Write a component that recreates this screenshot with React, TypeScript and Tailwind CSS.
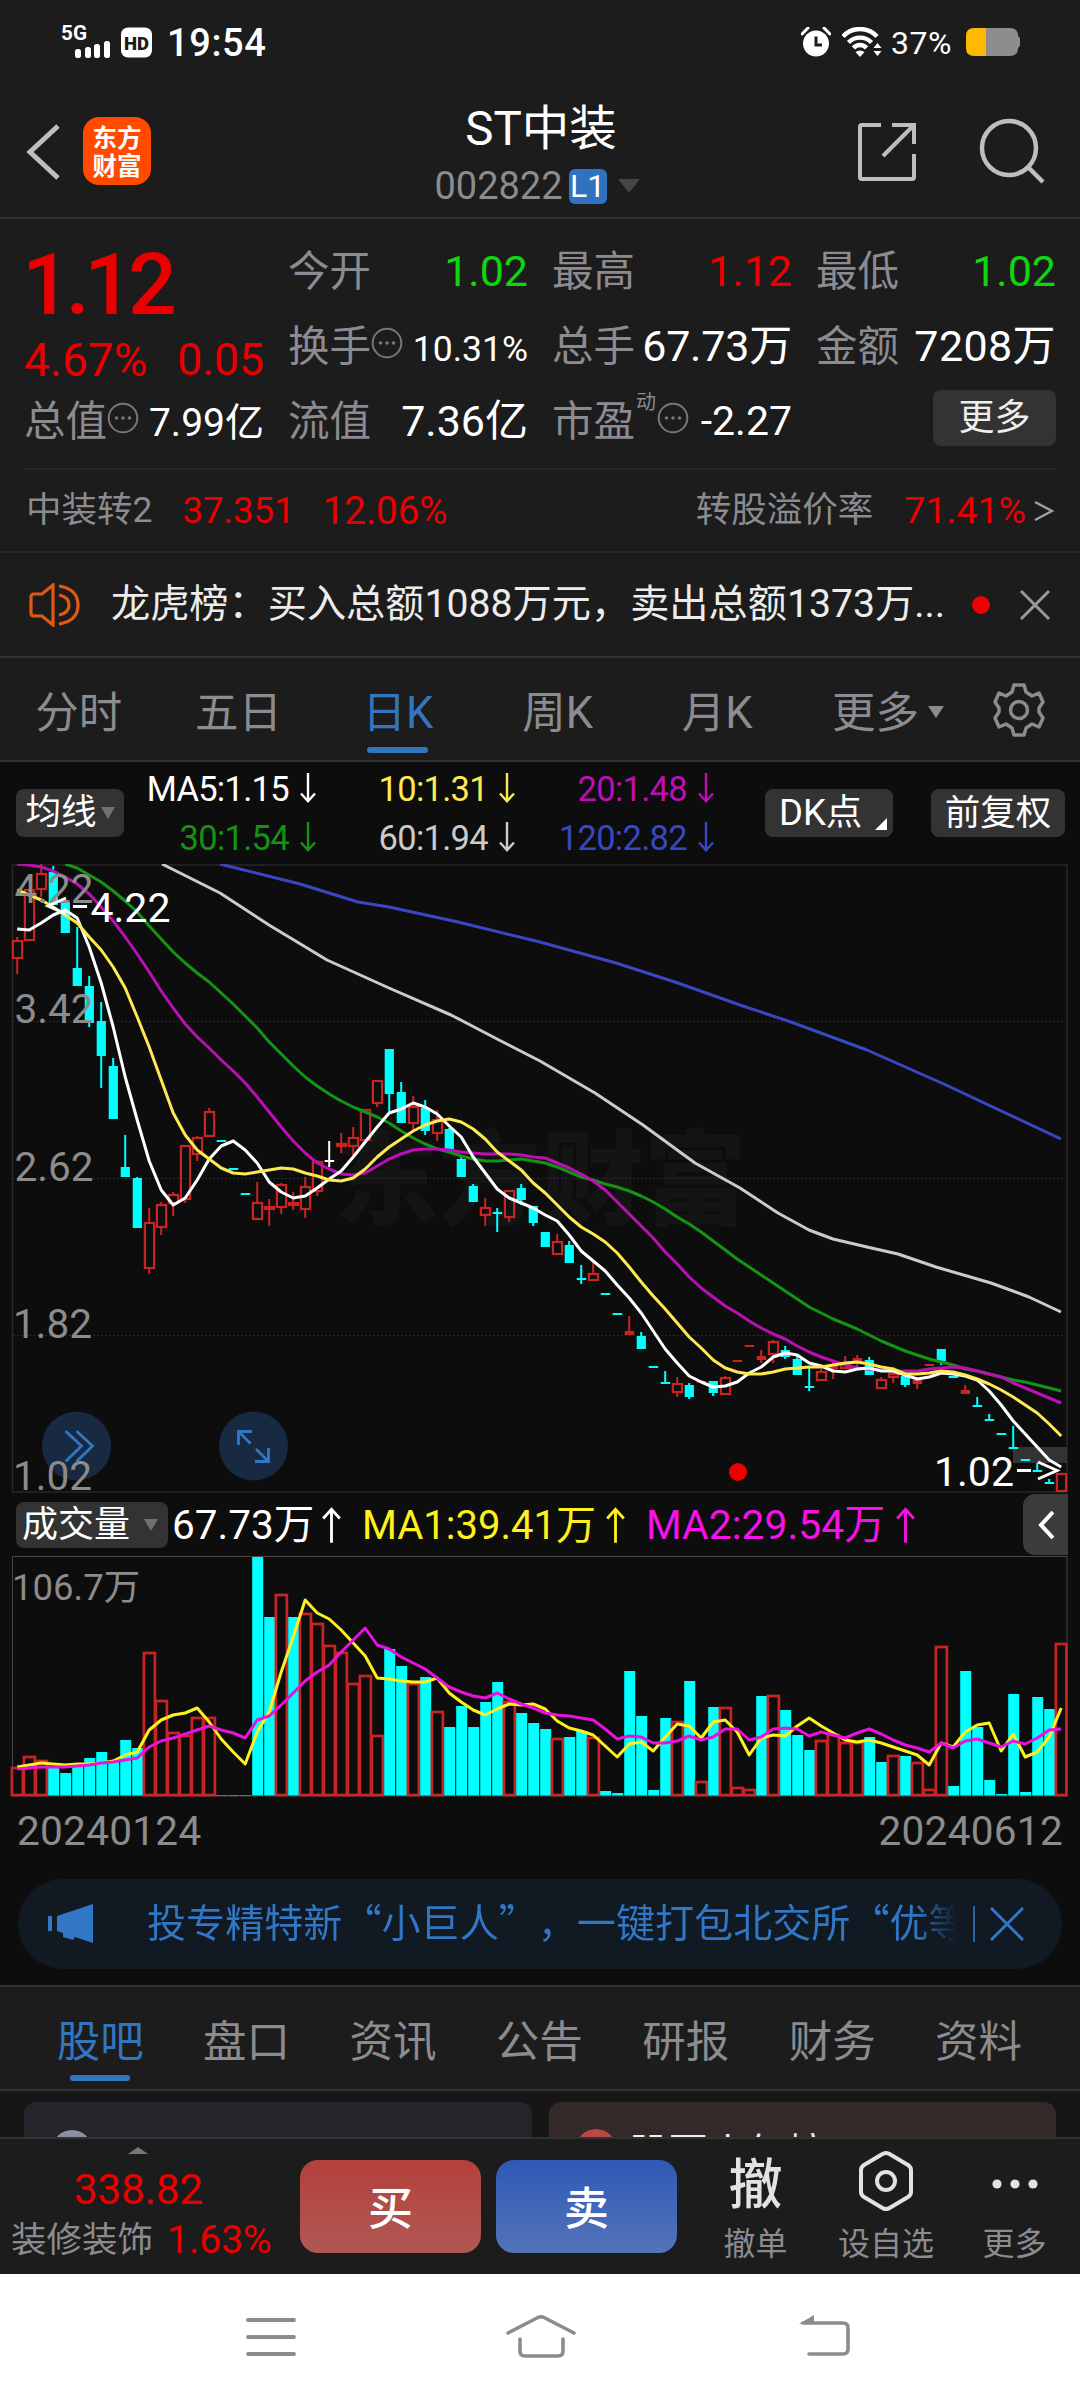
import type { ReactNode } from "react";

type Candle = [string, number, number, number, number];

// [kind, high, bodyTop, bodyBottom, low] - r: up, c: down, w: flat
const candles: Candle[] = [
  ["r", 937, 940, 959, 974], ["r", 889, 889, 941, 941], ["r", 864, 873, 890, 897], ["c", 866, 872, 905, 905],
  ["c", 900, 902, 933, 933], ["c", 927, 968, 986, 986], ["c", 976, 986, 1023, 1027], ["c", 1002, 1021, 1056, 1088],
  ["c", 1058, 1066, 1119, 1119], ["c", 1135, 1167, 1177, 1177], ["c", 1177, 1178, 1228, 1228], ["r", 1208, 1222, 1269, 1274],
  ["r", 1202, 1204, 1228, 1235], ["r", 1192, 1194, 1204, 1216], ["r", 1145, 1145, 1200, 1203], ["r", 1136, 1137, 1155, 1161],
  ["r", 1108, 1111, 1137, 1137], ["c", 1141, 1141, 1141, 1141], ["c", 1169, 1169, 1169, 1169], ["c", 1194, 1194, 1194, 1194],
  ["r", 1182, 1202, 1220, 1220], ["r", 1199, 1206, 1210, 1226], ["r", 1183, 1184, 1208, 1214], ["r", 1192, 1202, 1206, 1210],
  ["r", 1177, 1186, 1210, 1218], ["r", 1160, 1161, 1192, 1196], ["w", 1141, 1161, 1161, 1167], ["r", 1133, 1143, 1147, 1153],
  ["r", 1127, 1137, 1147, 1155], ["r", 1109, 1109, 1141, 1141], ["r", 1080, 1080, 1104, 1107], ["c", 1049, 1049, 1094, 1113],
  ["c", 1082, 1092, 1123, 1123], ["r", 1096, 1106, 1124, 1130], ["c", 1100, 1108, 1131, 1135], ["r", 1110, 1119, 1134, 1141],
  ["c", 1128, 1129, 1149, 1149], ["c", 1155, 1159, 1177, 1177], ["c", 1184, 1186, 1202, 1202], ["r", 1198, 1207, 1216, 1226],
  ["c", 1208, 1213, 1213, 1232], ["r", 1190, 1190, 1218, 1222], ["c", 1184, 1188, 1200, 1205], ["c", 1206, 1206, 1223, 1226],
  ["c", 1232, 1232, 1247, 1247], ["r", 1234, 1241, 1255, 1255], ["c", 1241, 1245, 1263, 1263], ["c", 1265, 1279, 1279, 1284],
  ["r", 1262, 1273, 1281, 1281], ["c", 1294, 1294, 1294, 1294], ["c", 1314, 1314, 1314, 1314], ["r", 1316, 1332, 1334, 1334],
  ["c", 1332, 1336, 1349, 1349], ["c", 1367, 1367, 1367, 1367], ["c", 1371, 1383, 1383, 1383], ["r", 1377, 1383, 1393, 1397],
  ["c", 1383, 1385, 1397, 1399], ["r", 1382, 1382, 1382, 1382], ["c", 1381, 1381, 1393, 1396], ["r", 1376, 1377, 1395, 1395],
  ["r", 1361, 1361, 1361, 1361], ["r", 1346, 1346, 1346, 1346], ["r", 1350, 1357, 1359, 1363], ["r", 1340, 1341, 1355, 1363],
  ["c", 1346, 1350, 1357, 1359], ["c", 1355, 1359, 1375, 1375], ["c", 1368, 1387, 1387, 1391], ["r", 1369, 1371, 1381, 1381],
  ["r", 1360, 1366, 1368, 1379], ["r", 1356, 1363, 1369, 1369], ["r", 1355, 1359, 1360, 1367], ["c", 1357, 1360, 1375, 1375],
  ["r", 1377, 1379, 1389, 1389], ["r", 1367, 1373, 1378, 1383], ["c", 1376, 1376, 1385, 1387], ["r", 1380, 1381, 1383, 1389],
  ["r", 1365, 1365, 1365, 1365], ["c", 1349, 1349, 1361, 1365], ["c", 1377, 1377, 1377, 1377], ["r", 1385, 1391, 1393, 1393],
  ["c", 1397, 1406, 1406, 1406], ["c", 1414, 1420, 1420, 1420], ["c", 1434, 1434, 1434, 1434], ["c", 1426, 1448, 1448, 1448],
  ["c", 1460, 1460, 1460, 1460], ["c", 1463, 1471, 1471, 1471], ["c", 1479, 1483, 1483, 1483], ["r", 1473, 1473, 1492, 1492],
];

const ma5 = [929, 930, 923, 915, 910, 918, 947, 983, 1027, 1077, 1120, 1161, 1190, 1205, 1198, 1180, 1159, 1146, 1141, 1150, 1163, 1182, 1192, 1198, 1196, 1188, 1179, 1171, 1157, 1142, 1127, 1113, 1109, 1103, 1107, 1114, 1126, 1137, 1157, 1173, 1189, 1198, 1203, 1208, 1215, 1221, 1235, 1251, 1261, 1271, 1285, 1298, 1313, 1331, 1349, 1363, 1376, 1382, 1387, 1386, 1382, 1373, 1367, 1357, 1353, 1355, 1363, 1366, 1371, 1372, 1369, 1368, 1371, 1371, 1375, 1379, 1377, 1373, 1374, 1376, 1380, 1391, 1405, 1421, 1434, 1447, 1460, 1467];
const ma10 = [890, 895, 900, 907, 915, 923, 937, 950, 967, 988, 1017, 1047, 1080, 1113, 1135, 1150, 1159, 1168, 1173, 1174, 1172, 1170, 1168, 1169, 1173, 1176, 1180, 1181, 1178, 1169, 1157, 1147, 1139, 1131, 1125, 1121, 1119, 1122, 1129, 1139, 1152, 1161, 1170, 1183, 1193, 1205, 1217, 1227, 1234, 1242, 1253, 1267, 1282, 1296, 1309, 1323, 1337, 1348, 1360, 1368, 1372, 1374, 1374, 1372, 1369, 1368, 1367, 1367, 1365, 1363, 1362, 1364, 1367, 1369, 1374, 1374, 1373, 1371, 1372, 1375, 1379, 1384, 1390, 1397, 1405, 1413, 1424, 1436];
const ma20 = [864, 865, 867, 871, 877, 884, 894, 907, 921, 937, 954, 972, 991, 1008, 1024, 1037, 1048, 1060, 1071, 1083, 1097, 1112, 1127, 1141, 1153, 1163, 1169, 1174, 1175, 1173, 1166, 1159, 1154, 1150, 1149, 1149, 1150, 1152, 1153, 1154, 1154, 1154, 1155, 1157, 1158, 1163, 1168, 1174, 1181, 1190, 1202, 1214, 1226, 1238, 1252, 1264, 1277, 1288, 1297, 1306, 1313, 1321, 1328, 1334, 1339, 1346, 1352, 1357, 1361, 1365, 1368, 1369, 1370, 1371, 1371, 1371, 1369, 1368, 1367, 1368, 1371, 1374, 1377, 1383, 1388, 1393, 1398, 1403];
// MA30 enters the plot at the fifth bar
const ma30 = [864, 868, 875, 882, 891, 901, 912, 926, 939, 952, 963, 973, 982, 993, 1004, 1016, 1028, 1042, 1054, 1066, 1077, 1086, 1094, 1101, 1107, 1112, 1117, 1123, 1131, 1138, 1144, 1149, 1152, 1156, 1159, 1161, 1161, 1160, 1159, 1161, 1163, 1167, 1172, 1177, 1180, 1184, 1187, 1191, 1196, 1202, 1209, 1217, 1224, 1232, 1241, 1250, 1259, 1267, 1275, 1283, 1291, 1299, 1307, 1313, 1319, 1324, 1329, 1335, 1341, 1346, 1351, 1355, 1359, 1362, 1365, 1369, 1371, 1374, 1377, 1380, 1382, 1385, 1388, 1391];
const ma60 = "162,864 220,893 269,925 327,960 389,988 451,1015 499,1040 540,1061 595,1093 643,1125 695,1163 740,1188 778,1213 809,1230 833,1239 867,1247 898,1254 936,1267 991,1283 1029,1297 1061,1312";
const ma120 = "220,864 300,884 358,902 389,907 458,922 540,942 616,963 678,983 740,1005 791,1022 867,1050 946,1085 1061,1139";

const volumeTops = [1767, 1756, 1760, 1767, 1773, 1767, 1758, 1752, 1762, 1740, 1748, 1652, 1700, 1732, 1735, 1717, 1717, 1795, 1795, 1795, 1557, 1617, 1594, 1617, 1613, 1623, 1645, 1652, 1683, 1675, 1735, 1649, 1666, 1683, 1677, 1711, 1727, 1706, 1727, 1702, 1682, 1701, 1713, 1723, 1729, 1738, 1737, 1731, 1737, 1791, 1793, 1671, 1716, 1790, 1718, 1721, 1681, 1781, 1707, 1707, 1787, 1789, 1696, 1695, 1710, 1735, 1750, 1740, 1734, 1742, 1742, 1737, 1762, 1755, 1756, 1762, 1789, 1646, 1786, 1671, 1727, 1780, 1794, 1694, 1792, 1697, 1709, 1643];
const volumeKinds = [
  "rrrccccccccrrrrrrccccc",
  "rcrrrrrrrccrcrccccc",
  "rcccrccrccccccrcrcrrr",
  "crcccrrrrccrcrrrcccccccccr",
].join("");
const volumeMa1 = [1767, 1765, 1763, 1764, 1765, 1764, 1764, 1763, 1761, 1755, 1752, 1730, 1720, 1715, 1713, 1708, 1722, 1739, 1752, 1764, 1732, 1712, 1672, 1637, 1600, 1613, 1619, 1630, 1643, 1656, 1678, 1679, 1681, 1682, 1682, 1678, 1693, 1702, 1710, 1715, 1709, 1704, 1705, 1704, 1709, 1721, 1728, 1731, 1735, 1746, 1757, 1744, 1742, 1751, 1737, 1724, 1726, 1738, 1722, 1720, 1732, 1755, 1738, 1735, 1736, 1726, 1718, 1726, 1733, 1740, 1742, 1740, 1743, 1747, 1751, 1755, 1765, 1743, 1747, 1732, 1725, 1723, 1751, 1734, 1757, 1752, 1737, 1708];
const volumeMa2 = [1769, 1768, 1767, 1767, 1767, 1766, 1765, 1763, 1762, 1760, 1758, 1747, 1741, 1738, 1734, 1730, 1726, 1730, 1733, 1738, 1720, 1716, 1705, 1693, 1681, 1672, 1665, 1652, 1640, 1628, 1645, 1649, 1657, 1663, 1669, 1678, 1687, 1692, 1696, 1698, 1693, 1699, 1704, 1708, 1713, 1715, 1716, 1718, 1720, 1729, 1739, 1736, 1737, 1743, 1743, 1741, 1736, 1740, 1737, 1729, 1729, 1740, 1737, 1729, 1728, 1729, 1736, 1732, 1735, 1738, 1733, 1729, 1734, 1740, 1745, 1748, 1752, 1743, 1748, 1741, 1739, 1743, 1747, 1741, 1744, 1738, 1730, 1729];

const barX = (i: number) => 17.2 + i * 12;
const toPoints = (ys: number[], offset = 0) =>
  ys.map((y, i) => `${barX(i + offset).toFixed(1)},${y}`).join(" ");

const UP = "#c92323";
const DOWN = "#00ffff";
const cjk = "font-['Noto_Sans_CJK_SC',sans-serif]";

function Arrow({ up, big }: { up?: boolean; big?: boolean }) {
  return (
    <svg
      viewBox="0 0 16 30"
      className={`shrink-0 ${big ? "h-[36px] w-[19px]" : "h-[30px] w-[16px]"} ${up ? "rotate-180" : ""}`}
      fill="none"
      stroke="currentColor"
      strokeWidth="2.4"
    >
      <path d="M8 0V28M1 20.5L8 28.2L15 20.5" />
    </svg>
  );
}

function More() {
  return (
    <svg viewBox="0 0 32 32" className="h-[32px] w-[32px] -translate-y-1" fill="#77777b">
      <circle cx="16" cy="16" r="14.3" fill="none" stroke="#77777b" strokeWidth="2" />
      <circle cx="9.5" cy="16" r="1.8" />
      <circle cx="16" cy="16" r="1.8" />
      <circle cx="22.5" cy="16" r="1.8" />
    </svg>
  );
}

function StatusBar() {
  return (
    <div className="flex h-[84px] items-center pl-[60px] pr-[60px]">
      <svg viewBox="0 0 94 36" className="h-[36px] w-[94px] overflow-visible" fill="#fff">
        <text x="1" y="16" fontSize="21" fontWeight="700" textLength="26" lengthAdjust="spacingAndGlyphs">5G</text>
        <rect x="15" y="25" width="6" height="9" rx="2.5" />
        <rect x="25" y="23" width="6" height="11" rx="2.5" />
        <rect x="34" y="20" width="6" height="14" rx="2.5" />
        <rect x="44" y="17" width="6" height="17" rx="2.5" />
        <rect x="61" y="3.500" width="31" height="30" rx="7" />
        <text x="64" y="25.500" fontSize="19" fontWeight="900" fill="#1c1c1c" textLength="25" lengthAdjust="spacingAndGlyphs">HD</text>
      </svg>
      <span className="ml-[13px] pt-[1px] text-[38px] font-medium tracking-[0.6px]">19:54</span>
      <div className="ml-auto flex items-center">
        <svg viewBox="0 0 30 30" className="h-[30px] w-[30px]" fill="#fff">
          <circle cx="15" cy="16.500" r="13" />
          <path d="M1 7L7 1M29 7L23 1" stroke="#fff" strokeWidth="3" strokeLinecap="round" />
          <path d="M15 9.500V18H21" fill="none" stroke="#1c1c1c" strokeWidth="3" />
        </svg>
        <svg viewBox="0 0 40 30" className="ml-[11px] h-[30px] w-[40px]" fill="none" stroke="#fff" strokeWidth="4.400">
          <path d="M1 9.500C10 -0.500 26 -0.500 35 9.500" />
          <path d="M6.500 15.500C12.500 9 23.500 9 29.500 15.500" />
          <path d="M11.500 21C15 17 21 17 24.500 21" />
          <path d="M18 30L13.500 25Q18 22 22.500 25Z" fill="#fff" stroke="none" />
          <path d="M35.500 16L39.500 21H31.500ZM35.500 29L39.500 24H31.500Z" fill="#fff" stroke="none" />
        </svg>
        <span className="ml-[9px] w-[65px] pt-[1px] text-[32px] tracking-[0.5px]">37%</span>
        <svg viewBox="0 0 54 28" className="ml-[10px] h-[28px] w-[54px]">
          <path d="M8 0H20V28H8Q0 28 0 20V8Q0 0 8 0Z" fill="#ffb800" />
          <path d="M20 0H44Q52 0 52 8Q54 9 54 11V17Q54 19 52 20Q52 28 44 28H20Z" fill="#8d8d8d" />
        </svg>
      </div>
    </div>
  );
}

function Header() {
  return (
    <div className="flex h-[135px] border-b-2 border-[#323232]">
      <svg viewBox="0 0 60 60" className="ml-[15px] mt-[38px] h-[60px] w-[60px]" fill="none" stroke="#bebebe" strokeWidth="5">
        <path d="M43 4L15 30L43 56" />
      </svg>
      <div className="ml-[8px] mt-[33px] flex h-[68px] w-[68px] flex-col items-center justify-center rounded-[16px] bg-[#ff4a00]">
        <div className={`${cjk} text-[24.5px] font-bold leading-[28px]`}>东方</div>
        <div className={`${cjk} text-[24.5px] font-bold leading-[28px]`}>财富</div>
      </div>
      <div className="flex flex-1 flex-col items-center pl-[65px]">
        <div className="ml-[9px] mt-[15px] text-[47.500px] leading-[60px]">ST中装</div>
        <div className="ml-[1px] mt-[6px] flex h-[42px] items-center">
          <span className="text-[38px] text-[#8b8b90]">002822</span>
          <span className="ml-[6px] flex h-[35px] w-[38px] items-center justify-center rounded-[6px] bg-[#2f72bf] text-[32px]">L1</span>
          <span className="ml-[11px] h-0 w-0 border-x-[11px] border-t-[14px] border-x-transparent border-t-[#464646]" />
        </div>
      </div>
      <svg viewBox="0 0 60 60" className="mt-[38px] h-[60px] w-[60px]" fill="none" stroke="#bebebe" strokeWidth="4">
        <path d="M24 3H5Q3 3 3 5V55Q3 57 5 57H55Q57 57 57 55V32M35 3H57V22M57 3L26 34" />
      </svg>
      <svg viewBox="0 0 66 66" className="ml-[62px] mr-[35px] mt-[34px] h-[66px] w-[66px]" fill="none" stroke="#bebebe" strokeWidth="4.500">
        <circle cx="30" cy="30" r="27" />
        <path d="M49 49L64 64" />
      </svg>
    </div>
  );
}

function Cell({ label, children, icon }: { label: ReactNode; children?: ReactNode; icon?: boolean }) {
  return (
    <div className="flex h-[75px] items-center whitespace-nowrap">
      <span className="text-[41.5px] text-[#8b8b90]">{label}</span>
      {icon && <More />}
      <span className="ml-auto">{children}</span>
    </div>
  );
}

function Quote() {
  return (
    <div className="mx-[24px] grid h-[251px] grid-cols-4 grid-rows-[75px_75px_75px] gap-x-[24px] border-b-2 border-[#262626] pt-[15px] text-[43px]">
      <div className="row-span-2 text-[#ea0000]">
        <div className="ml-[-2px] h-[98px] text-[86px] font-medium leading-[102px] tracking-[-5.200px]">1.12</div>
        <div className="flex justify-between text-[44.500px] leading-[56px]">
          <span className="text-[46px]">4.67%</span>
          <span>0.05</span>
        </div>
      </div>
      <Cell label="今开"><span className="text-[#0fd60f]">1.02</span></Cell>
      <Cell label="最高"><span className="text-[#ea0000]">1.12</span></Cell>
      <Cell label="最低"><span className="text-[#0fd60f]">1.02</span></Cell>
      <Cell label="换手" icon><span className="text-[35.500px]">10.31%</span></Cell>
      <Cell label="总手"><span className="tracking-[-0.2px]">67.73万</span></Cell>
      <Cell label="金额"><span className="tracking-[0.4px]">7208万</span></Cell>
      <Cell label="总值" icon><span className="text-[39px]">7.99亿</span></Cell>
      <Cell label="流值"><span>7.36亿</span></Cell>
      <div className="flex h-[75px] items-center">
        <span className="text-[41.5px] text-[#8b8b90]">市盈</span>
        <span className="-mt-[40px] ml-[1px] text-[20px] text-[#8b8b90]">动</span>
        <span className="ml-[1px]"><More /></span>
        <span className="ml-auto text-[41px]">-2.27</span>
      </div>
      <div className="mt-[6px] flex h-[56px] w-[123px] items-center justify-center justify-self-end rounded-[8px] bg-[#333] text-[36px] text-[#eee]">
        更多
      </div>
    </div>
  );
}

function BondRow() {
  return (
    <div className="flex h-[83px] items-center border-b-2 border-[#282828] px-[26px] pt-[1px] text-[35.500px] text-[#8b8b90]">
      <span>中装转2</span>
      <span className="ml-[30px] text-[36.500px] text-[#ea0000]">37.351</span>
      <span className="ml-[28px] text-[38.500px] text-[#ea0000]">12.06%</span>
      <span className="ml-auto">转股溢价率</span>
      <span className="ml-[31px] text-[37.500px] text-[#ea0000]">71.41%</span>
      <svg viewBox="0 0 20 22" className="ml-[8px] h-[22px] w-[20px]" fill="none" stroke="#a0a0a4" strokeWidth="2.500">
        <path d="M1 2L18 11L1 20" />
      </svg>
    </div>
  );
}

function Notice() {
  return (
    <div className="flex h-[105px] items-center border-b-2 border-[#323232] pl-[29px] pr-[29px]">
      <svg viewBox="0 0 52 44" className="h-[44px] w-[52px]" fill="none" stroke="#e0590f" strokeWidth="3.200">
        <path d="M24 2V42L13 33H5Q2 33 2 30V14Q2 11 5 11H13Z" />
        <path d="M30 12Q40 14 40 22Q40 30 30 32M30 3Q49 6 49 22Q49 38 30 41" />
      </svg>
      <span className="ml-[30px] whitespace-nowrap pt-[1px] text-[39.200px] text-[#ececec]">
        龙虎榜：买入总额1088万元，卖出总额1373万...
      </span>
      <span className="ml-auto h-[18px] w-[18px] rounded-full bg-[#ee0000]" />
      <svg viewBox="0 0 32 32" className="ml-[29px] h-[32px] w-[32px]" stroke="#9a9a9a" strokeWidth="3">
        <path d="M2 2L30 30M30 2L2 30" />
      </svg>
    </div>
  );
}

function PeriodTabs() {
  return (
    <div className="flex h-[104px] border-b-2 border-[#323232] text-[43.500px] text-[#8b8b90]">
      {["分时", "五日", "日K", "周K", "月K"].map((tab, i) => (
        <div key={tab} className={`flex w-[159.600px] flex-col items-center ${i === 0 ? "-ml-[1px]" : ""}`}>
          <div className={`mt-[20px] h-[69px] leading-[71px] ${tab === "日K" ? "text-[#3376bf]" : ""}`}>{tab}</div>
          {tab === "日K" && <div className="h-[6px] w-[61px] rounded-full bg-[#3376bf]" />}
        </div>
      ))}
      <div className="ml-[35px] mt-[21px] flex h-[69px] items-center">
        更多
        <span className="-mt-[4px] ml-[9px] h-0 w-0 border-x-[8px] border-t-[12px] border-x-transparent border-t-[#8b8b90]" />
      </div>
      <svg viewBox="0 0 52 54" className="ml-auto mr-[35px] mt-[25px] h-[54px] w-[52px]" fill="none" stroke="#8b8b90" strokeWidth="3.500" strokeLinejoin="round">
        <path d="M21 2H31L33 9L39 13L46 10L50 19L46 25V29L50 35L46 44L39 41L33 45L31 52H21L19 45L13 41L6 44L2 35L6 29V25L2 19L6 10L13 13L19 9Z" />
        <circle cx="26" cy="27" r="8.500" />
      </svg>
    </div>
  );
}

function MaItem({ text, width, color }: { text: string; width: string; color: string }) {
  return (
    <div className={`flex h-[49px] items-center justify-end ${width} ${color}`}>
      <span className="mr-[11px] pt-[3px]">{text}</span>
      <Arrow />
    </div>
  );
}

function MaRow() {
  return (
    <div className="flex h-[102px] items-center pl-[16px]">
      <div className="flex h-[48px] w-[108px] items-center justify-center rounded-[8px] bg-[#333] text-[35.500px]">
        均线
        <span className="ml-[4px] h-0 w-0 border-x-[7px] border-t-[12px] border-x-transparent border-t-[#707070]" />
      </div>
      <div className="w-[590px] pb-[2px] text-[34.500px] tracking-[-0.7px]">
        <div className="flex">
          <MaItem text="MA5:1.15" width="w-[192px]" color="text-white" />
          <MaItem text="10:1.31" width="w-[199px]" color="text-[#ffe952]" />
          <MaItem text="20:1.48" width="w-[199px]" color="text-[#bb0fb4]" />
        </div>
        <div className="flex">
          <MaItem text="30:1.54" width="w-[192px]" color="text-[#149314]" />
          <MaItem text="60:1.94" width="w-[199px]" color="text-[#cbcbcb]" />
          <MaItem text="120:2.82" width="w-[199px]" color="text-[#3848c4]" />
        </div>
      </div>
      <div className="relative ml-[51px] flex h-[48px] w-[128px] items-center rounded-[8px] bg-[#333] pl-[14px] pt-[1px] text-[36.500px]">
        DK点
        <svg viewBox="0 0 12 12" className="absolute bottom-[7px] right-[6px] h-[12px] w-[12px]" fill="#fff">
          <path d="M12 0V12H0Z" />
        </svg>
      </div>
      <div className="ml-[38px] flex h-[48px] w-[134px] items-center justify-center rounded-[8px] bg-[#333] pt-[1px] text-[35.500px]">
        前复权
      </div>
    </div>
  );
}

function CandleBar({ candle, index }: { candle: Candle; index: number }) {
  const [kind, high, top, bottom, low] = candle;
  const x = barX(index);
  const color = kind === "r" ? UP : kind === "c" ? DOWN : "#fff";
  const flat = bottom - top < 3;
  return (
    <g fill={color} stroke="none">
      {high < top && <rect x={x - 1} y={high} width="2" height={top - high} />}
      {low > bottom && <rect x={x - 1} y={bottom} width="2" height={low - bottom} />}
      {flat ? (
        <rect x={x - 4.5} y={top - 1} width="9.5" height={Math.max(2, bottom - top + 2)} />
      ) : kind === "r" ? (
        <rect x={x - 4.3} y={top + 1} width="9.2" height={bottom - top - 2} fill="none" stroke={UP} strokeWidth="2.2" />
      ) : (
        <rect x={x - 4.5} y={top} width="9.2" height={bottom - top} />
      )}
    </g>
  );
}

function PriceChart() {
  return (
    <svg viewBox="0 864 1080 629" className="block h-[629px] w-full" fill="none">
      <text x="335" y="1217" fontSize="103" fontWeight="900" fill="#141414">东方财富</text>
      <g stroke="#2b2b2b" strokeWidth="1" strokeDasharray="2 2">
        <path d="M13 1021.500H1067M13 1178.500H1067M13 1335.500H1067" />
      </g>
      <path d="M12.500 865H1067V1492H12.500Z" stroke="#272727" strokeWidth="1.600" />
      <circle cx="76.500" cy="1446" r="34.500" fill="#182a41" />
      <circle cx="253.500" cy="1446" r="34.500" fill="#182a41" />
      <g stroke="#3177c5" strokeWidth="2.800">
        <path d="M65.500 1431L81.500 1446L65.500 1461.500M76.500 1431L92.500 1446L76.500 1461.500" />
        <path d="M238.500 1445V1431.500H252M238.500 1431.500L250.500 1443.500M255 1461.500H268.500V1448M268.500 1461.500L256 1449" />
      </g>
      <rect x="1013" y="1447" width="54" height="16" fill="#333" />
      {candles.map((candle, i) => (
        <CandleBar key={i} candle={candle} index={i} />
      ))}
      <g strokeWidth="3" strokeLinejoin="round">
        <polyline points={ma120} stroke="#3848c4" />
        <polyline points={ma60} stroke="#cbcbcb" />
        <polyline points={toPoints(ma30, 4)} stroke="#149314" />
        <polyline points={toPoints(ma20)} stroke="#bb0fb4" />
        <polyline points={toPoints(ma5)} stroke="#fff" />
        <polyline points={toPoints(ma10)} stroke="#ffe952" />
      </g>
      <g fill="#8c8c8c" fontSize="40.500">
        <text x="14.500" y="903">4.22</text>
        <text x="14.500" y="1023">3.42</text>
        <text x="14.500" y="1180.500">2.62</text>
        <text x="13" y="1337.500">1.82</text>
        <text x="13" y="1490">1.02</text>
      </g>
      <circle cx="738" cy="1472" r="9" fill="#ee0000" />
      <g fill="#fff" fontSize="41">
        <text x="90.500" y="921.500">4.22</text>
        <text x="934" y="1485.500">1.02</text>
      </g>
      <g stroke="#fff" strokeWidth="3">
        <path d="M66 898L48 906L66 914M73 906.500H87" />
        <path d="M1017 1470.500H1031M1038 1462L1057 1470.500L1038 1479" />
      </g>
    </svg>
  );
}

function VolumeHeader() {
  return (
    <div className="flex h-[63px] items-center pl-[16px] text-[40px]">
      <div className="flex h-[46px] w-[152px] items-center rounded-[8px] bg-[#333] pl-[6px] text-[36px]">
        成交量
        <span className="ml-[14px] h-0 w-0 border-x-[7px] border-t-[12px] border-x-transparent border-t-[#707070]" />
      </div>
      <span className="ml-[4px] w-[150px] pt-[2px] text-[40.500px]">67.73万</span>
      <Arrow up big />
      <span className="ml-[21px] w-[244px] pt-[2px] text-[#fff01f]">MA1:39.41万</span>
      <span className="text-[#fff01f]"><Arrow up big /></span>
      <span className="ml-[21px] w-[250px] pt-[2px] text-[40.900px] text-[#f512e6]">MA2:29.54万</span>
      <span className="text-[#f512e6]"><Arrow up big /></span>
      <div className="ml-auto mr-[12px] flex h-[61px] w-[45px] items-center justify-center rounded-l-[12px] bg-[#3c3c3c]">
        <svg viewBox="0 0 16 28" className="h-[28px] w-[16px]" fill="none" stroke="#fff" strokeWidth="4">
          <path d="M15 1L3 14L15 27" />
        </svg>
      </div>
    </div>
  );
}

function VolumeChart() {
  return (
    <svg viewBox="0 1556 1080 241" className="block h-[241px] w-full" fill="none">
      <path d="M12.500 1556.500H1067V1796H12.500Z" stroke="#484848" strokeWidth="1" />
      {volumeTops.map((top, i) =>
        volumeKinds[i] === "r" ? (
          <rect key={i} x={barX(i) - 5.3} y={top + 1} width={i === 87 ? 10.5 : 11} height={1794 - top} stroke={UP} strokeWidth="2.7" />
        ) : (
          <rect key={i} x={barX(i) - 5} y={top} width="11" height={1795.5 - top} fill={DOWN} />
        )
      )}
      <g strokeWidth="3" strokeLinejoin="round">
        <polyline points={toPoints(volumeMa1)} stroke="#fff01f" />
        <polyline points={toPoints(volumeMa2)} stroke="#e812dc" />
      </g>
      <text x="12" y="1599.500" fontSize="36.500" fill="#8c8c8c">106.7万</text>
    </svg>
  );
}

function Banner() {
  return (
    <div className="mx-[18px] flex h-[90px] items-center rounded-full bg-[#111a23] pl-[30px] pr-[38px]">
      <svg viewBox="0 0 46 40" className="h-[40px] w-[46px]" fill="#3177c5">
        <path d="M45 0V39L27 33L25 36L15 33V29L9 27V12Z" />
        <rect x="0" y="12" width="4" height="15" />
      </svg>
      <div className="ml-[53px] mt-[4px] w-[810px] overflow-hidden whitespace-nowrap bg-[linear-gradient(90deg,#3177c5_95%,transparent_100%)] bg-clip-text leading-[60px] text-transparent">
        <span className={`${cjk} text-[39.100px] [text-spacing-trim:space-all]`}>投专精特新“小巨人”，一键打包北交所“优等</span>
      </div>
      <div className="ml-auto h-[36px] w-[2px] bg-[#2a64a5]" />
      <svg viewBox="0 0 34 34" className="ml-[15px] h-[34px] w-[34px]" stroke="#3177c5" strokeWidth="3">
        <path d="M1 1L33 33M33 1L1 33" />
      </svg>
    </div>
  );
}

function InfoTabs() {
  return (
    <div className="flex h-[106px] border-y-2 border-[#323232] bg-[#1c1c1c] pl-[27px] text-[43.500px] text-[#8b8b90]">
      {["股吧", "盘口", "资讯", "公告", "研报", "财务", "资料"].map((tab, i) => (
        <div key={tab} className="flex w-[146.400px] flex-col items-center">
          <div className={`mt-[18px] h-[70px] leading-[75px] ${i === 0 ? "text-[#3376bf]" : ""}`}>{tab}</div>
          {i === 0 && <div className="h-[6px] w-[60px] rounded-full bg-[#3376bf]" />}
        </div>
      ))}
    </div>
  );
}

function CardPeek() {
  return (
    <div className="flex h-[46px] gap-[17px] overflow-hidden bg-[#161616] px-[24px] pt-[11px]">
      <div className="h-[90px] flex-1 rounded-[12px] bg-[#24252a] pl-[28px] pt-[28px]">
        <div className="h-[40px] w-[40px] rounded-full bg-[#8990a2]" />
      </div>
      <div className="flex h-[90px] flex-1 rounded-[12px] bg-[#332928] pl-[27px] pt-[27px]">
        <div className="h-[40px] w-[40px] shrink-0 rounded-full bg-[#b84a45]" />
        <span className="ml-[13px] mt-[2px] text-[39.500px] leading-[46px] text-[#eee]">股票人气榜</span>
      </div>
    </div>
  );
}

function Action({ label, width, children }: { label: string; width: string; children: ReactNode }) {
  return (
    <div className={`flex flex-col items-center ${width}`}>
      <div className="mt-[8px] flex h-[74px] items-center justify-center">{children}</div>
      <div className="text-[32px] leading-[46px] text-[#8b8b90]">{label}</div>
    </div>
  );
}

function BottomBar() {
  return (
    <div className="flex h-[137px] border-t-2 border-[#323232]">
      <div className="flex w-[300px] flex-col">
        <span className="ml-[128px] mt-[8px] h-0 w-0 border-x-[10px] border-b-[7px] border-x-transparent border-b-[#77777b]" />
        <div className="ml-[74px] mt-[8px] text-[42px] leading-[56px] text-[#ea0000]">338.82</div>
        <div className="-mt-[1px] ml-[11px] flex items-center text-[35.500px] leading-[46px] text-[#8b8b90]">
          装修装饰<span className="ml-[14px] text-[39px] text-[#ea0000]">1.63%</span>
        </div>
      </div>
      <div className="mt-[21px] flex h-[93px] w-[181px] items-center justify-center rounded-[18px] bg-linear-to-b from-[#b3403b] to-[#b05853] pt-[5px] text-[45px] font-medium">买</div>
      <div className="ml-[15px] mt-[21px] flex h-[93px] w-[181px] items-center justify-center rounded-[18px] bg-linear-to-b from-[#2f59b5] to-[#5474b9] pt-[5px] text-[45px] font-medium">卖</div>
      <div className="ml-[17px] flex">
        <Action label="撤单" width="w-[123px]">
          <span className="pt-[4px] text-[54px] font-medium leading-[60px] text-[#e2e2e2]">撤</span>
        </Action>
        <Action label="设自选" width="w-[138px]">
          <svg viewBox="0 0 54 60" className="-mt-[6px] h-[60px] w-[54px]" fill="none" stroke="#e2e2e2" strokeWidth="4" strokeLinejoin="round">
            <path d="M23.500 3Q27 1 30.500 3L49 14Q52 16 52 19V41Q52 44 49 46L30.500 57Q27 59 23.500 57L5 46Q2 44 2 41V19Q2 16 5 14Z" />
            <circle cx="27" cy="30" r="9" />
          </svg>
        </Action>
        <Action label="更多" width="w-[119px]">
          <svg viewBox="0 0 48 12" className="h-[12px] w-[48px]" fill="#e2e2e2">
            <circle cx="6" cy="6" r="4.600" />
            <circle cx="24" cy="6" r="4.600" />
            <circle cx="42" cy="6" r="4.600" />
          </svg>
        </Action>
      </div>
    </div>
  );
}

function SystemNav() {
  return (
    <div className="flex h-[126px] items-start bg-white pt-[38px]">
      <svg viewBox="0 0 52 48" className="ml-[245px] h-[48px] w-[52px]" stroke="#8c8c8c" strokeWidth="3.800" strokeLinecap="round">
        <path d="M3 8H49M3 25H49M3 42H49" />
      </svg>
      <svg viewBox="0 0 72 48" className="ml-[208px] h-[48px] w-[72px]" fill="none" stroke="#8c8c8c" strokeWidth="3.600" strokeLinecap="round">
        <path d="M3 21L33 5.500Q36 4 39 5.500L69 21M15 27V39Q15 44 20 44H53Q58 44 58 39V27" />
      </svg>
      <svg viewBox="0 0 54 48" className="ml-[221px] h-[48px] w-[54px]" fill="none" stroke="#8c8c8c" strokeWidth="3.600" strokeLinecap="round">
        <path d="M5 11H45Q50 11 50 16V37Q50 42 45 42H11" />
        <path d="M1 12L16 3V12Z" fill="#8c8c8c" stroke="none" />
      </svg>
    </div>
  );
}

export default function App() {
  return (
    <div className="h-[2400px] w-[1080px] overflow-hidden bg-[#1c1c1c] font-['Roboto','Noto_Sans_CJK_SC',sans-serif] leading-none text-white">
      <StatusBar />
      <Header />
      <Quote />
      <BondRow />
      <Notice />
      <PeriodTabs />
      <div className="bg-[#0d0d0d]">
        <MaRow />
        <PriceChart />
        <VolumeHeader />
        <VolumeChart />
        <div className="flex h-[82px] justify-between pl-[17px] pr-[17px] pt-[14px] text-[40.500px] leading-[40px] tracking-[0.3px] text-[#8c8c8c]">
          <span>20240124</span>
          <span>20240612</span>
        </div>
        <Banner />
        <div className="h-[16px]" />
      </div>
      <InfoTabs />
      <CardPeek />
      <BottomBar />
      <SystemNav />
    </div>
  );
}
